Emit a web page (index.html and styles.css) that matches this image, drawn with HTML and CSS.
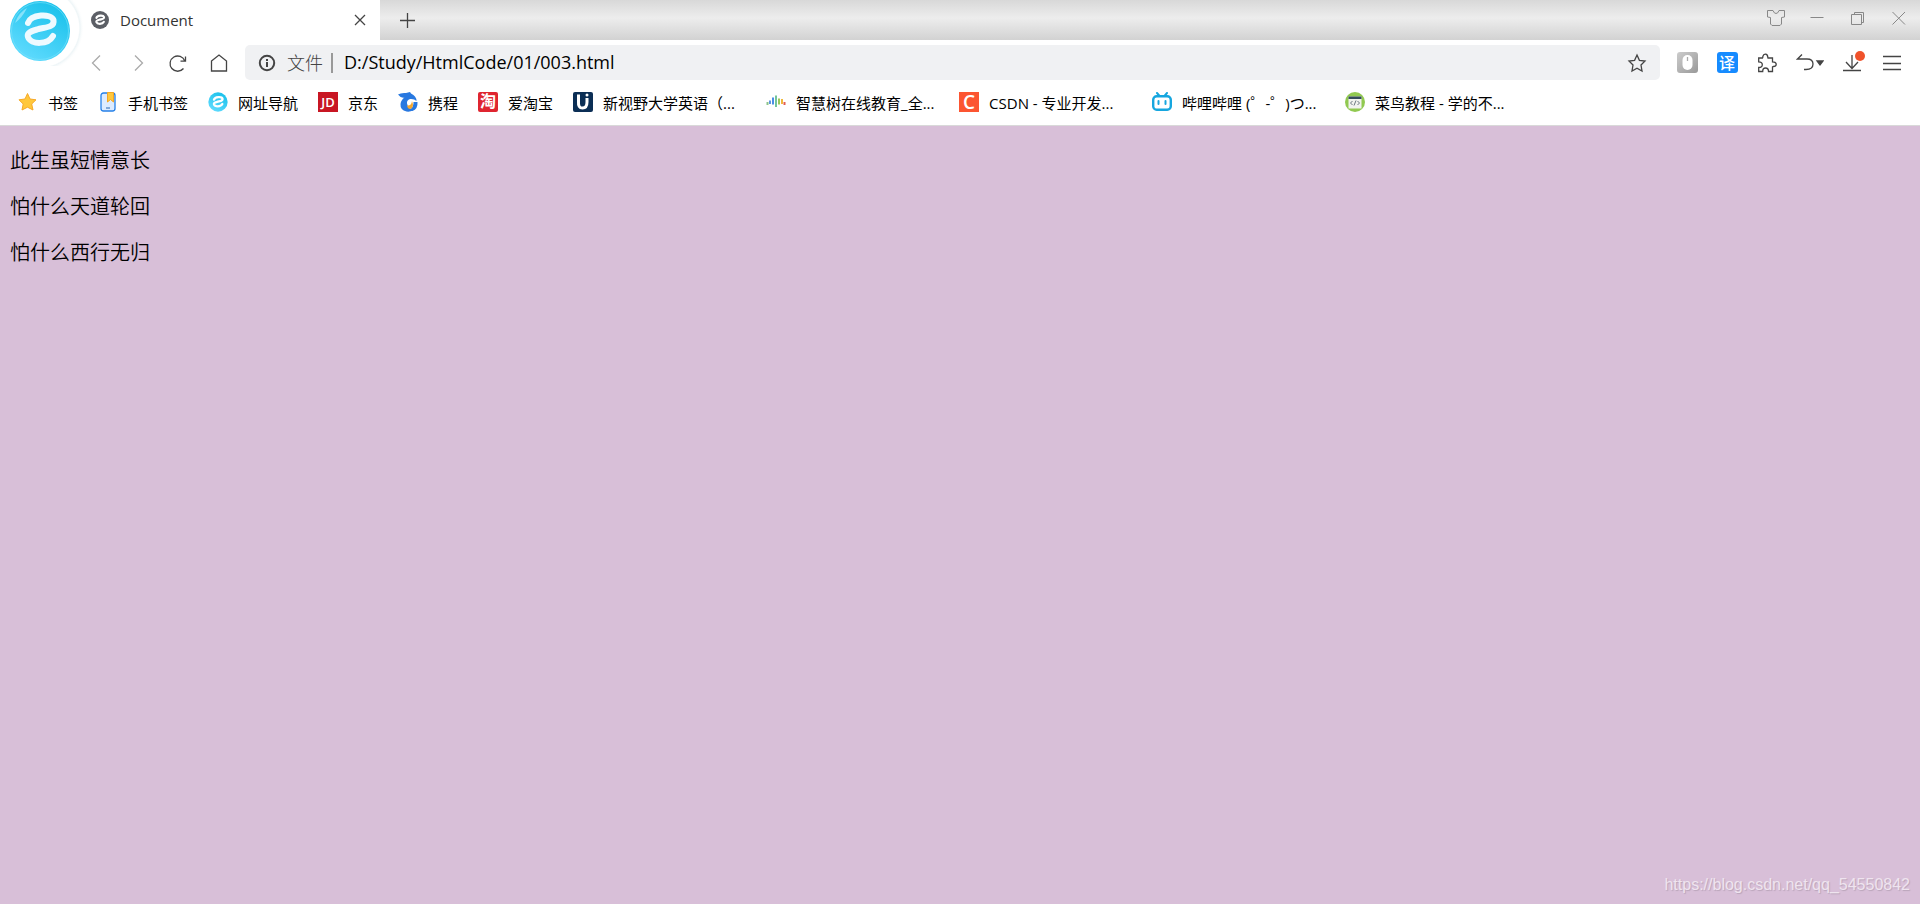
FILE: index.html
```html
<!DOCTYPE html>
<html lang="zh-CN">
<head>
<meta charset="utf-8">
<title>Document</title>
<link rel="stylesheet" href="styles.css">
</head>
<body>
<header class="browser">
  <svg class="logo" viewBox="0 0 84 66" aria-hidden="true">
    <defs>
      <linearGradient id="sky" x1="0.8" y1="0" x2="0.2" y2="1"><stop offset="0" stop-color="#16c0ea"/><stop offset="1" stop-color="#63dcff"/></linearGradient>
      <radialGradient id="halo" cx="0.5" cy="0.5" r="0.5"><stop offset="0.88" stop-color="#fff"/><stop offset="0.91" stop-color="#eef5f7"/><stop offset="1" stop-color="#fff" stop-opacity="0"/></radialGradient>
      <g id="emark"><path d="M18 23C21 14 41 13 43.500 20C45 28 34 27 27 29.500C18 32 17 34 18 37C21 45 38 45 43 36" fill="none" stroke-linecap="round" stroke-linejoin="round"/></g>
    </defs>
    <circle cx="40" cy="28" r="44" fill="url(#halo)"/>
    <path d="M0 0H40V66H0Z" fill="#fff"/>
    <circle cx="40" cy="31" r="30" fill="url(#sky)"/>
    <circle cx="40" cy="31" r="28.500" fill="none" stroke="#7be2fa" stroke-width="1" opacity=".6"/>
    <path d="M15 23Q19 12 27 8Q22 18 15 23Z" fill="#c7f4ff" opacity=".55"/>
    <use href="#emark" x="10" stroke="#eefaff" stroke-width="6"/>
  </svg>
  <div class="tabstrip">
    <div class="tab">
      <svg class="favicon" viewBox="0 0 60 60" aria-hidden="true"><circle cx="30" cy="30" r="30" fill="#5c5f66"/><use href="#emark" stroke="#fff" stroke-width="7"/></svg>
      <span class="tab-title">Document</span>
      <button class="tab-close" aria-label="关闭标签页"><svg width="12" height="12" viewBox="0 0 12 12"><path d="M1 1L11 11M11 1L1 11"/></svg></button>
    </div>
    <button class="new-tab" aria-label="新建标签页"><svg width="15" height="15" viewBox="0 0 15 15"><path d="M7.500 0V15M0 7.500H15"/></svg></button>
    <div class="window-controls">
      <button aria-label="皮肤"><svg width="20" height="20" viewBox="0 0 20 20"><path d="M1.500 2.500H7Q8 5.500 10 5.500Q12 5.500 13 2.500H18.500V9L15.500 9.500V16L14 17.500H6L4.500 16V9.500L1.500 9Z"/></svg></button>
      <button aria-label="最小化"><svg width="20" height="20" viewBox="0 0 20 20"><path d="M3.500 9.500H16.500"/></svg></button>
      <button aria-label="还原"><svg width="20" height="20" viewBox="0 0 20 20"><path d="M3.500 6.500H13.500V16.500H3.500ZM6.500 6V4.500H15.500V14.500H14"/></svg></button>
      <button aria-label="关闭"><svg width="20" height="20" viewBox="0 0 20 20"><path d="M3.500 4L16 16.500M16 4L3.500 16.500"/></svg></button>
    </div>
  </div>
  <div class="toolbar">
    <nav class="history" aria-label="导航">
      <button class="dim" aria-label="后退"><svg width="20" height="20" viewBox="0 0 20 20"><path d="M14 2.500L6.500 10L14 17.500"/></svg></button>
      <button class="dim" aria-label="前进"><svg width="20" height="20" viewBox="0 0 20 20"><path d="M8 2.500L15.500 10L8 17.500"/></svg></button>
      <button aria-label="刷新"><svg width="20" height="20" viewBox="0 0 20 20"><path d="M15.500 15.500A7.600 7.600 0 1 1 16.800 8M17.500 3.500V8.200H12.500"/></svg></button>
      <button aria-label="主页"><svg width="20" height="20" viewBox="0 0 20 20"><path d="M2.500 8L10 2L17.500 8V18H2.500Z"/></svg></button>
    </nav>
    <div class="address">
      <svg class="info" width="18" height="18" viewBox="0 0 18 18" aria-hidden="true"><circle cx="9" cy="9" r="7.200"/><path d="M9 8V13M9 5V7"/></svg>
      <label class="scheme" for="url">文件</label>
      <input class="url" id="url" type="text" value="D:/Study/HtmlCode/01/003.html">
      <button class="fav" aria-label="收藏"><svg width="20" height="20" viewBox="0 0 20 20"><path d="M10 2L12.400 7.300L18 8L14 12L15 18L10 15.200L5 18L6 12L2 8L7.600 7.300Z"/></svg></button>
    </div>
    <div class="tools">
      <button aria-label="鼠标手势"><svg width="21" height="21" viewBox="0 0 21 21"><defs><linearGradient id="grey" x1="0" y1="0" x2="1" y2="1"><stop offset="0" stop-color="#ccc"/><stop offset="1" stop-color="#999"/></linearGradient></defs><rect width="21" height="21" rx="3" fill="url(#grey)" stroke="none"/><rect x="5.500" y="3" width="10" height="15" rx="5" fill="#fff" stroke="none"/><path d="M10.500 5V9" stroke="#aaa"/></svg></button>
      <button aria-label="翻译"><span class="translate">译</span></button>
      <button aria-label="扩展"><svg width="20" height="20" viewBox="0 0 20 20"><path d="M1.700 5H5.500Q6 4.500 5.800 3.500Q6.500 1 8.500 1.200Q10.700 1.500 10.700 4L11 5H15.500V9L17 9.200Q19.200 9.500 19.200 11.500Q19 13.500 16.500 13.500L15.500 14V18.500H11.500Q11.500 15 8.500 15Q5.700 15 5.700 18.500H1.700V14.500Q5.300 14.500 5.300 11.700Q5.300 8.800 1.700 8.800Z"/></svg></button>
      <button class="undo" aria-label="撤销"><svg width="28" height="20" viewBox="0 0 28 20"><path d="M6 1.500L1.500 6H11Q17 6 17 11Q17 16.500 10 16.500H8"/><path d="M21 8H27L24 12Z" fill="#444"/></svg></button>
      <button aria-label="下载"><svg width="26" height="26" viewBox="0 0 26 26"><path d="M13 5V18M7 12L13 18.500L19 12M4 20.500H22"/><circle cx="21" cy="6" r="5" fill="#f0522b" stroke="none"/></svg></button>
      <button aria-label="菜单"><svg width="20" height="20" viewBox="0 0 20 20"><path d="M1 3.500H19M1 10.500H19M1 16.500H19"/></svg></button>
    </div>
  </div>
  <nav class="bookmarks" aria-label="书签">
    <a href="#"><svg viewBox="0 0 20 20"><path d="M9.500 1.500L12 7L18 7.800L13.700 12L15 18L9.500 15.200L4 18L5.200 12L1 7.800L7 7Z" fill="#ffc83c" stroke="#f7a928" stroke-linejoin="round"/></svg><span>书签</span></a>
    <a href="#"><svg viewBox="0 0 20 20"><rect x="3" y="1" width="14" height="18" rx="2.500" fill="#dcebff" stroke="#2680e8" stroke-width="1.300"/><path d="M9.500 .5H15.500V10L12.500 7.500L9.500 10Z" fill="#ffc83c" stroke="#f5a623"/><path d="M8 16H12" stroke="#2464b0"/></svg><span>手机书签</span></a>
    <a href="#"><svg viewBox="0 0 60 60"><circle cx="30" cy="30" r="29" fill="url(#sky)"/><use href="#emark" stroke="#fff" stroke-width="7"/></svg><span>网址导航</span></a>
    <a href="#"><i class="badge jd">JD</i><span>京东</span></a>
    <a href="#"><svg viewBox="0 0 20 20"><path d="M0 2.500Q3 .5 8 1L12 0L13 1.500Q18.500 4 18.500 9Q16 6.500 12 7Q8.500 8 9 11.500Q10 16 15 18.500Q12 20 8.500 19.500Q2 18 2.500 12Q3 8 6.500 5.500Q3 6.500 0 2.500Z" fill="#2878e0"/><path d="M15.500 10H19.500Q20 17 14.500 19L11 18Q16 15 15.500 10Z" fill="#2878e0"/><path d="M14 9Q16.500 15 12.500 17Q9.500 17 9 13.500Q13.500 14 14 9Z" fill="#f6a62c"/></svg><span>携程</span></a>
    <a href="#"><i class="badge taobao">淘</i><span>爱淘宝</span></a>
    <a class="long" href="#"><svg viewBox="0 0 20 20"><rect width="20" height="20" rx="2" fill="#0b2e55"/><path d="M5.500 2.500V10Q5 16 9.500 16Q14 16 14 10V6" fill="none" stroke="#fff" stroke-width="3"/><circle cx="14" cy="3" r="1.500" fill="#fff"/></svg><span>新视野大学英语（...</span></a>
    <a class="long" href="#"><svg viewBox="0 0 20 20" fill="none" stroke-width="2"><path d="M1.500 10V13" stroke="#8cc58c"/><path d="M4 8.500V12" stroke="#5f96e0"/><path d="M7 5.500V12.500" stroke="#4a8ee6"/><path d="M10 3.500V15" stroke="#72c59d"/><path d="M13 6.500V12.500" stroke="#98c85b"/><path d="M16 7V12" stroke="#f0b83c"/><path d="M18.500 10V13" stroke="#e45d50"/></svg><span>智慧树在线教育_全...</span></a>
    <a class="long" href="#"><i class="badge csdn">C</i><span>CSDN - 专业开发...</span></a>
    <a class="long" href="#"><svg viewBox="0 0 20 20"><path d="M5 1L7.500 4M15 1L12.500 4" stroke="#16a6df" stroke-width="2" stroke-linecap="round"/><rect x="1.200" y="4.200" width="17.600" height="13.600" rx="3.500" fill="#fff" stroke="#16a6df" stroke-width="2.400"/><path d="M6.500 9V12M13.500 9V12" stroke="#16a6df" stroke-width="2" stroke-linecap="round"/></svg><span>哔哩哔哩 (゜-゜)つ...</span></a>
    <a class="long" href="#"><svg viewBox="0 0 20 20"><circle cx="10" cy="10" r="10" fill="#91c950"/><rect x="3.500" y="4.500" width="13" height="12" fill="#f1f3ee"/><path d="M3.500 4.500H16.500V7H3.500Z" fill="#344b5b"/><path d="M7.500 9L5.500 11L7.500 13M12.500 9L14.500 11L12.500 13M11 8.500L9 13.500" fill="none" stroke="#6b7780"/></svg><span>菜鸟教程 - 学的不...</span></a>
  </nav>
</header>
<main class="page">
  <p>此生虽短情意长</p>
  <p>怕什么天道轮回</p>
  <p>怕什么西行无归</p>
  <footer class="watermark">https://blog.csdn.net/qq_54550842</footer>
</main>
</body>
</html>
```
FILE: styles.css
```css
* { box-sizing: border-box; }
body {
  margin: 0;
  min-height: 100vh;
  display: flex;
  flex-direction: column;
  background: #d8bfd8;
  color: #000;
  font-family: "Open Sans", "Noto Sans CJK SC", sans-serif;
}
button {
  display: flex;
  align-items: center;
  justify-content: center;
  padding: 0;
  border: 0;
  background: none;
}
button svg, .info {
  fill: none;
  stroke: #444;
  stroke-width: 1.3;
  flex: none;
}
.browser {
  position: relative;
  background: #fff;
  border-bottom: 1px solid #d9d9d9;
}
.logo {
  position: absolute;
  left: 0;
  top: 0;
  width: 84px;
  height: 66px;
}
.tabstrip {
  display: flex;
  height: 40px;
  background: linear-gradient(#d8d8d8, #ededed 45%, #d2d2d2);
}
.tab {
  display: flex;
  align-items: center;
  width: 380px;
  padding: 0 12px 0 91px;
  background: #fff;
}
.favicon { width: 18px; height: 18px; position: relative; }
.tab-title {
  flex: 1;
  margin-left: 11px;
  font-size: 15px;
  line-height: 24px;
  color: #333;
}
.tab-close { width: 16px; height: 24px; }
.new-tab { width: 55px; }
.window-controls { display: flex; margin-left: auto; height: 36px; padding-right: 1px; }
.window-controls button { width: 41px; }
.window-controls svg { stroke: #888; stroke-width: 1; }
.toolbar {
  display: flex;
  align-items: center;
  height: 45px;
  padding: 0 8px 0 75px;
}
.history, .tools { display: flex; }
.history button { width: 41px; height: 35px; }
.history .dim svg { stroke: #aaa; }
.address {
  display: flex;
  align-items: center;
  flex: 1;
  height: 35px;
  margin: 0 7px 0 6px;
  padding: 0 13px;
  border-radius: 5px;
  background: #f0f1f3;
}
.info { stroke-width: 2; }
.scheme {
  margin-left: 11px;
  padding-right: 8px;
  border-right: 2px solid #999;
  font-size: 18px;
  line-height: 20px;
  font-weight: 300;
  color: #444;
}
.url {
  flex: 1;
  min-width: 0;
  height: 26px;
  margin-left: 11px;
  padding: 0 0 2px;
  border: 0;
  background: none;
  color: #000;
  font-family: "Open Sans", sans-serif;
  font-size: 18px;
}
.tools button { width: 40px; height: 35px; }
.tools .undo { width: 45px; }
.translate {
  width: 21px;
  height: 21px;
  border-radius: 3px;
  background: #168bff;
  color: #fff;
  font: 500 16px/20px "Noto Sans CJK SC", sans-serif;
}
.bookmarks {
  display: flex;
  align-items: flex-start;
  gap: 20px;
  height: 40px;
  padding: 5px 18px 0;
}
.bookmarks a {
  display: flex;
  align-items: center;
  gap: 10px;
  color: #000;
  font-size: 15px;
  line-height: 26px;
  white-space: nowrap;
  text-decoration: none;
}
.bookmarks svg, .badge { width: 20px; height: 20px; flex: none; margin-bottom: 2px; }
.bookmarks .long span { width: 143px; }
.badge {
  color: #fff;
  font-style: normal;
  text-align: center;
}
.jd { background: #c81623; font-size: 13px; line-height: 20px; font-weight: 600; }
.taobao { border-radius: 2px; background: #df2530; font-size: 16px; line-height: 18px; font-weight: 700; }
.csdn { background: #fc5531; font-size: 19px; line-height: 20px; font-weight: 600; }
.page {
  display: flex;
  flex-direction: column;
  flex: 1;
  padding: 22px 10px 5px;
}
.page p {
  margin: 0 0 20px;
  font-size: 20px;
  line-height: 26px;
  font-weight: 350;
}
.watermark {
  margin-top: auto;
  align-self: flex-end;
  font: 16px/28px "Liberation Sans", sans-serif;
  color: #efe4ef;
  text-shadow: 1px 1px 1px #b9a4b9;
}
```
